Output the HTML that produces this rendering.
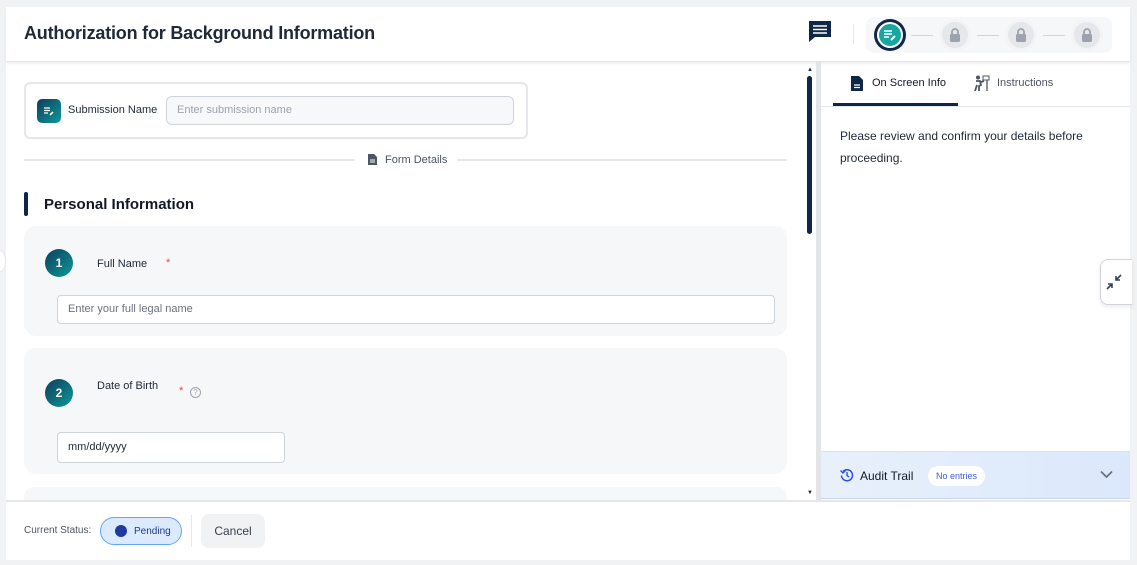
<!DOCTYPE html>
<html><head><style>
*{box-sizing:border-box;margin:0;padding:0}
body{width:1137px;height:565px;background:#f1f2f4;font-family:"Liberation Sans",sans-serif;position:relative;overflow:hidden;color:#1f2937}
.abs{position:absolute}
.card{left:6px;top:7px;width:1124px;height:553px;background:#fff}
.hdr{left:6px;top:7px;width:1124px;height:55px;background:#fff;border-bottom:1px solid #e2e4e8;box-shadow:0 2px 3px rgba(0,0,0,.06)}
.title{left:24px;top:23px;font-size:18px;font-weight:bold;color:#1f2937;letter-spacing:-0.2px}
.step{width:32px;height:32px;border-radius:50%;background:#e5e7eb;border:3px solid #f3f4f6}
.ln{height:1px;background:#d1d5db;width:22px}
.num{width:28px;height:28px;border-radius:50%;background:linear-gradient(135deg,#0f3d5c,#0e9a98);color:#fff;font-size:12px;font-weight:bold;text-align:center;line-height:28px}
.lbl{font-size:11px;color:#1f2937}
.inp{border:1px solid #cfd3da;border-radius:4px;background:#fff;font-size:11px;color:#6b7280;padding-left:10px}
</style></head><body>
<div class="abs card"></div>
<div class="abs hdr"></div>
<div class="abs title">Authorization for Background Information</div>
<svg class="abs" style="left:808px;top:19px" width="24" height="24" viewBox="0 0 24 24"><path d="M1 2h22v16H7l-6 5z" fill="#0f2747"/><path d="M5 7h14M5 10.5h14M5 14h14" stroke="#fff" stroke-width="1.6"/></svg>
<div class="abs" style="left:853px;top:24px;width:1px;height:20px;background:#e5e7eb"></div>
<div class="abs" style="left:866px;top:17px;width:246px;height:36px;background:#f6f7f9;border-radius:8px"></div>
<div class="abs" style="left:874px;top:19px;width:32px;height:32px;border-radius:50%;background:#0f2747"></div>
<div class="abs" style="left:877px;top:22px;width:26px;height:26px;border-radius:50%;background:#17a6a0;border:2px solid #fff"></div>
<svg class="abs" style="left:883px;top:28px" width="14" height="14" viewBox="0 0 14 14"><path d="M1 3h8M1 6h8M1 9h5" stroke="#fff" stroke-width="1.5"/><path d="M8 12l4-4" stroke="#fff" stroke-width="2"/></svg>
<div class="abs ln" style="left:911px;top:35px"></div>
<div class="abs ln" style="left:977px;top:35px"></div>
<div class="abs ln" style="left:1043px;top:35px"></div>
<div class="abs step" style="left:939px;top:19px"></div>
<div class="abs step" style="left:1005px;top:19px"></div>
<div class="abs step" style="left:1071px;top:19px"></div>
<svg class="abs" style="left:949px;top:27px" width="12" height="16" viewBox="0 0 12 16"><path d="M3 7V5a3 3 0 0 1 6 0v2" stroke="#9ca3af" stroke-width="1.8" fill="none"/><rect x="1" y="7" width="10" height="8" rx="1.5" fill="#9ca3af"/></svg>
<svg class="abs" style="left:1015px;top:27px" width="12" height="16" viewBox="0 0 12 16"><path d="M3 7V5a3 3 0 0 1 6 0v2" stroke="#9ca3af" stroke-width="1.8" fill="none"/><rect x="1" y="7" width="10" height="8" rx="1.5" fill="#9ca3af"/></svg>
<svg class="abs" style="left:1081px;top:27px" width="12" height="16" viewBox="0 0 12 16"><path d="M3 7V5a3 3 0 0 1 6 0v2" stroke="#9ca3af" stroke-width="1.8" fill="none"/><rect x="1" y="7" width="10" height="8" rx="1.5" fill="#9ca3af"/></svg>

<div class="abs" style="left:24px;top:82px;width:504px;height:57px;border:2px solid #e5e7eb;border-radius:6px"></div>
<div class="abs" style="left:37px;top:99px;width:24px;height:24px;border-radius:5px;background:linear-gradient(135deg,#0f3d5c,#0e9a98)"></div>
<svg class="abs" style="left:43px;top:105px" width="12" height="12" viewBox="0 0 12 12"><path d="M1 3h6M1 5.5h6M1 8h4" stroke="#fff" stroke-width="1.2"/><path d="M7 10l3-3" stroke="#fff" stroke-width="1.6"/></svg>
<div class="abs lbl" style="left:68px;top:104px;font-size:11px">Submission Name</div>
<div class="abs inp" style="left:166px;top:96px;width:348px;height:29px;line-height:27px;background:#f7f8fa;border-radius:6px;color:#9ca3af">Enter submission name</div>
<div class="abs" style="left:24px;top:159px;width:330px;height:2px;background:#e5e7eb"></div>
<div class="abs" style="left:457px;top:159px;width:330px;height:2px;background:#e5e7eb"></div>
<svg class="abs" style="left:368px;top:154px" width="9" height="11" viewBox="0 0 9 11"><path d="M0 0h6l3 3v8H0z" fill="#4b5563"/><path d="M2 6h5M2 8h5" stroke="#fff"/></svg>
<div class="abs" style="left:385px;top:154px;font-size:11px;color:#4b5563">Form Details</div>
<div class="abs" style="left:24px;top:192px;width:4px;height:24px;background:#0f2747;border-radius:2px"></div>
<div class="abs" style="left:44px;top:196px;font-size:15px;font-weight:bold;color:#111827">Personal Information</div>

<div class="abs" style="left:24px;top:226px;width:763px;height:110px;background:#f6f7f9;border-radius:12px"></div>
<div class="abs num" style="left:45px;top:249px">1</div>
<div class="abs lbl" style="left:97px;top:258px">Full Name</div>
<div class="abs" style="left:166px;top:257px;font-size:11px;color:#ef4444">*</div>
<div class="abs inp" style="left:57px;top:295px;width:718px;height:29px;line-height:27px;color:#6b7280">Enter your full legal name</div>

<div class="abs" style="left:24px;top:348px;width:763px;height:126px;background:#f6f7f9;border-radius:12px"></div>
<div class="abs num" style="left:45px;top:379px">2</div>
<div class="abs lbl" style="left:97px;top:380px">Date of Birth</div>
<div class="abs" style="left:179px;top:385px;font-size:11px;color:#ef4444">*</div>
<div class="abs" style="left:190px;top:387px;width:11px;height:11px;border-radius:50%;border:1.3px solid #9ca3af;font-size:8px;color:#9ca3af;text-align:center;line-height:9px">?</div>
<div class="abs inp" style="left:57px;top:432px;width:228px;height:31px;line-height:29px;color:#1f2937;font-size:11px">mm/dd/yyyy</div>
<div class="abs" style="left:24px;top:487px;width:763px;height:20px;background:#f6f7f9;border-radius:12px"></div>

<div class="abs" style="left:807px;top:76px;width:5px;height:158px;background:#0f2747;border-radius:3px"></div>
<div class="abs" style="left:807px;top:67px;font-size:6px;color:#0f2747">▲</div>
<div class="abs" style="left:807px;top:490px;font-size:6px;color:#0f2747">▼</div>
<div class="abs" style="left:816px;top:62px;width:5px;height:438px;background:#e2e4e8"></div>
<div class="abs" style="left:-6px;top:250px;width:12px;height:22px;border-radius:50%;background:#fff;border:1px solid #e5e7eb"></div>

<div class="abs" style="left:821px;top:62px;width:309px;height:45px;border-bottom:1px solid #e5e7eb"></div>
<div class="abs" style="left:833px;top:103px;width:125px;height:3px;background:#0f2747"></div>
<svg class="abs" style="left:851px;top:76px" width="12" height="15" viewBox="0 0 12 15"><path d="M0 0h8l4 4v11H0z" fill="#0f2747"/><path d="M3 9h6M3 11.5h6" stroke="#fff" stroke-width="1.2"/></svg>
<div class="abs" style="left:872px;top:77px;font-size:11px;color:#111827">On Screen Info</div>
<svg class="abs" style="left:974px;top:75px" width="16" height="16" viewBox="0 0 16 16"><circle cx="4" cy="2.5" r="2" fill="#4b5563"/><path d="M2 6h4l1 4-2 1v5M3 10l-2 6M7 7l3-1" stroke="#4b5563" stroke-width="1.8" fill="none"/><rect x="9" y="1" width="6" height="4" fill="none" stroke="#4b5563"/><path d="M13 5v11" stroke="#4b5563" stroke-width="1.3"/></svg>
<div class="abs" style="left:997px;top:77px;font-size:11px;color:#4b5563">Instructions</div>
<div class="abs" style="left:840px;top:125px;width:270px;font-size:12px;line-height:22px;color:#1f2937">Please review and confirm your details before proceeding.</div>
<div class="abs" style="left:1100px;top:259px;width:32px;height:46px;background:#fff;border:1.5px solid #d1d5db;border-right:none;border-radius:8px 0 0 8px;box-shadow:0 2px 4px rgba(0,0,0,.08)"></div>
<svg class="abs" style="left:1106px;top:274px" width="16" height="16" viewBox="0 0 16 16"><path d="M15 1l-5 5M10 2v4h4M1 15l5-5M2 10h4v4" stroke="#374151" stroke-width="1.6" fill="none"/></svg>
<div class="abs" style="left:821px;top:451px;width:309px;height:48px;background:linear-gradient(90deg,#e8f0fb,#dbe8fb);border-top:1px solid #dbe3ee;border-bottom:1px solid #c8d6ea"></div>
<svg class="abs" style="left:840px;top:468px" width="14" height="14" viewBox="0 0 14 14"><path d="M3 3.5A5.5 5.5 0 1 1 1.5 7.5" stroke="#2b4fe0" stroke-width="1.5" fill="none"/><path d="M0.5 2.5L3 5l2.5-2.5" stroke="#2b4fe0" stroke-width="1.4" fill="none"/><path d="M7 4v3.5l2 1.5" stroke="#2b4fe0" stroke-width="1.4" fill="none"/></svg>
<div class="abs" style="left:860px;top:469px;font-size:12px;color:#111827">Audit Trail</div>
<div class="abs" style="left:928px;top:466px;width:57px;height:20px;background:#fff;border-radius:10px;font-size:9px;color:#3b5bdb;text-align:center;line-height:20px">No entries</div>
<svg class="abs" style="left:1100px;top:470px" width="13" height="9" viewBox="0 0 13 9"><path d="M1 1.5l5.5 5.5 5.5-5.5" stroke="#6b7280" stroke-width="1.8" fill="none"/></svg>

<div class="abs" style="left:6px;top:500px;width:1124px;height:60px;background:#fff;border-top:2px solid #e5e7eb"></div>
<div class="abs" style="left:24px;top:525px;font-size:10px;color:#4b5563">Current Status:</div>
<div class="abs" style="left:100px;top:517px;width:82px;height:28px;border-radius:14px;background:#dbeafe;border:1.5px solid #60a5fa"></div>
<div class="abs" style="left:115px;top:525px;width:12px;height:12px;border-radius:50%;background:#1e3a9f"></div>
<div class="abs" style="left:134px;top:526px;font-size:10px;color:#1e3a8a">Pending</div>
<div class="abs" style="left:191px;top:515px;width:1px;height:32px;background:#e5e7eb"></div>
<div class="abs" style="left:201px;top:514px;width:64px;height:34px;border-radius:8px;background:#f1f2f4;font-size:12px;color:#374151;text-align:center;line-height:34px">Cancel</div>
</body></html>
